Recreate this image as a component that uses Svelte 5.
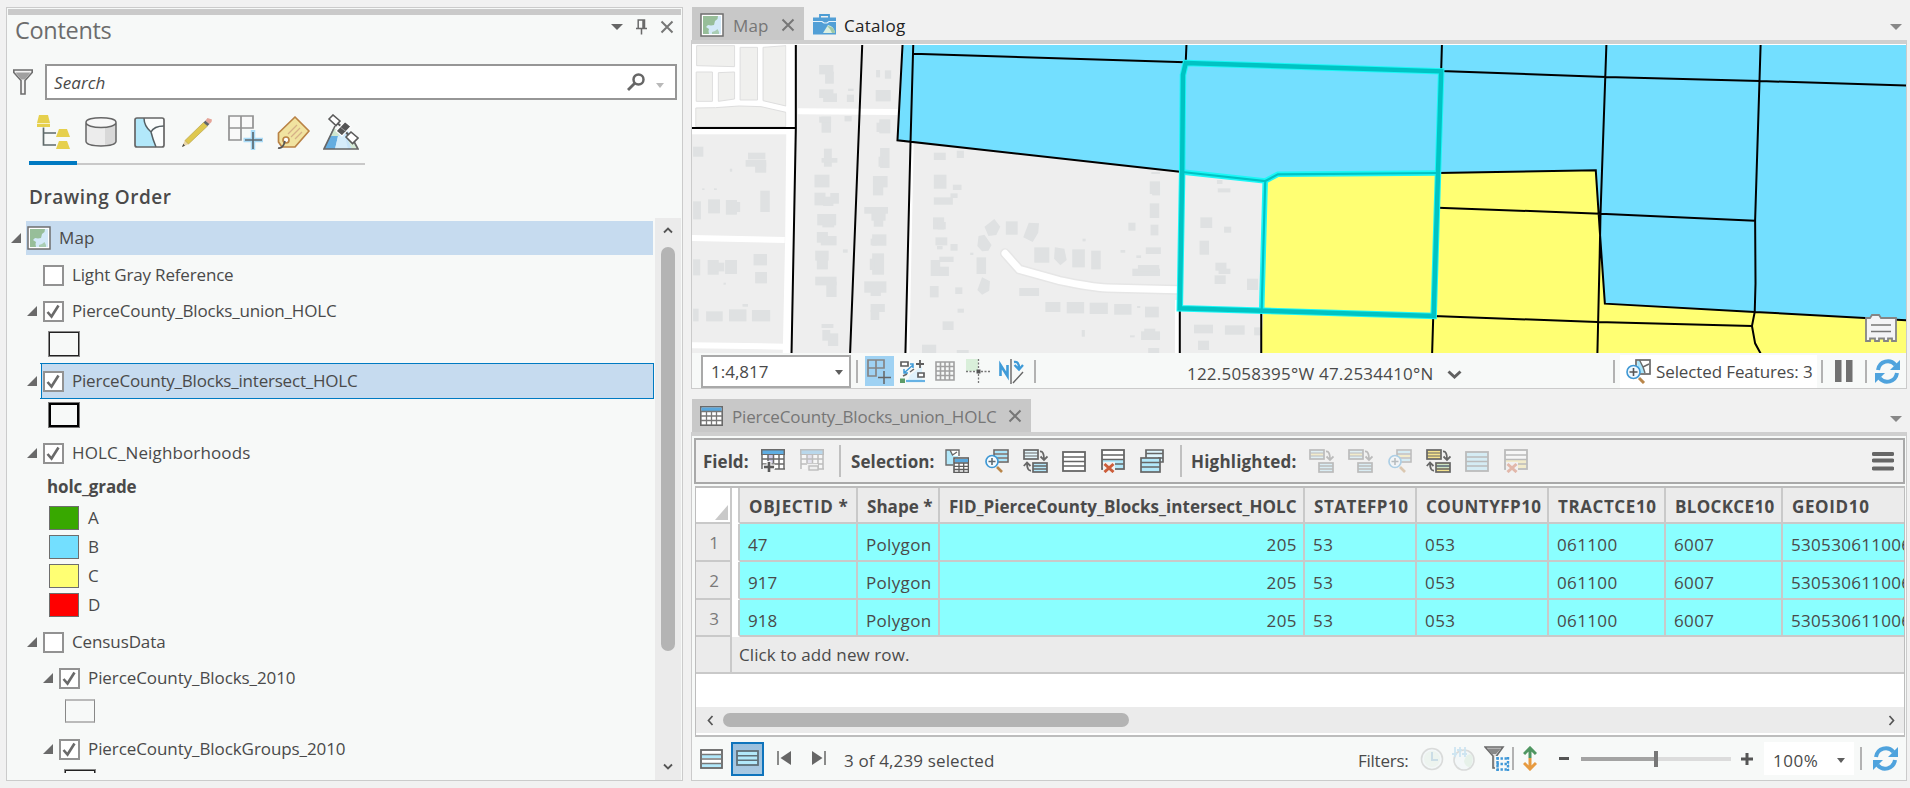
<script>
  // Tracks a label so that it spans the given advance width.
  function fit(node, width) {
    if (!width) return;
    const natural = node.getBoundingClientRect().width;
    const count = node.textContent.length;
    node.style.letterSpacing = (width + 1.5 - natural) / count + 'px';
  }

  const grades = [
    { name: 'A', color: '#38a800' },
    { name: 'B', color: '#73dfff' },
    { name: 'C', color: '#ffff73' },
    { name: 'D', color: '#ff0000' }
  ];

  const columns = [
    { name: 'OBJECTID *', w: 98 },
    { name: 'Shape *', w: 64 },
    { name: 'FID_PierceCounty_Blocks_intersect_HOLC', w: 346 },
    { name: 'STATEFP10', w: 93 },
    { name: 'COUNTYFP10', w: 114 },
    { name: 'TRACTCE10', w: 97 },
    { name: 'BLOCKCE10', w: 98 },
    { name: 'GEOID10', w: 76 }
  ];
  const cellWidths = [0, 64, 29, 19, 29, 59, 39, 149];
  const rows = ['47', '917', '918'].map((id) => [id, 'Polygon', '205', '53', '053', '061100', '6007', '530530611006007']);

  const blocks = [
    [352,195,36,28],[367,215,22,36],[352,268,36,26],[362,280,35,26],[495,270,38,34],[496,210,10,22],[518,211,16,25],[422,284,18,22],[425,266,14,7],[358,350,24,48],[352,350,30,18],[416,348,18,16],[504,358,28,42],[497,368,20,28],[364,446,20,54],[358,474,40,14],[506,444,24,60],[502,470,10,30],[340,524,38,38],[488,528,37,34],[488,560,26,26],[340,578,28,38],[362,590,26,28],[380,579,22,32],[466,621,60,20],[484,636,36,26],[490,660,24,20],[347,642,48,34],[360,660,30,22],[346,696,28,32],[356,708,40,28],[486,703,36,34],[482,716,16,20],[342,752,34,30],[346,778,28,30],[412,748,12,10],[486,760,30,64],[480,776,12,34],[342,830,54,26],[370,845,26,46],[466,844,56,34],[482,870,26,18],[482,912,36,24],[482,930,22,30],[358,972,30,12],[360,990,20,32],[374,1000,26,38],
    [33,440,26,30],[172,458,44,20],[166,480,52,20],[190,488,28,30],[126,506,6,9],[33,604,20,54],[71,598,30,42],[116,600,28,44],[130,606,22,30],[203,572,24,64],[56,565,6,5],[86,565,7,5],[33,778,18,48],[70,780,28,44],[86,788,26,26],[114,780,30,42],[186,762,34,34],[190,816,30,34],[110,848,6,6],[33,926,14,38],[66,934,42,30],[124,928,44,36],[182,930,46,34],[158,912,14,8],
    [642,458,30,22],[700,452,18,22],[642,524,32,42],[690,554,22,16],[642,592,48,22],[684,580,18,14],[640,652,28,36],[652,666,20,22],[646,712,30,24],[684,732,18,20],[650,738,14,10],[634,780,24,48],[656,770,36,16],[656,800,24,28],[750,772,24,50],[632,858,22,34],[696,862,18,20],[702,926,16,12],[664,964,28,26],[734,758,8,7],[824,664,30,40],[896,742,38,46],[992,748,32,54],[1040,752,24,56],[858,864,50,24],[924,906,38,30],[978,906,44,34],[1036,908,46,34],[1098,912,44,32],[1156,918,8,6],[1176,920,35,32],[1188,544,26,38],[1194,562,20,24],[1188,610,24,44],[1190,674,20,32],[1134,668,18,24],[1178,742,38,20],[1144,806,70,22],[1158,795,54,20],[1114,750,12,8],[1154,766,12,8],[1018,716,8,8],[1016,990,8,20],[1166,994,48,26],[1174,986,28,20],[1138,1006,12,6],[1184,1044,28,16],[612,1034,36,26],[700,1050,30,10],[1192,516,22,6],
    [1316,652,30,32],[1376,680,18,18],[1314,722,24,42],[1354,788,28,24],[1362,806,30,16],[1352,826,28,26],[1434,836,28,34],[1360,565,32,12],[1358,540,14,12],[1300,974,48,26],[1378,976,50,28],[1310,1022,28,28],[1452,982,18,24]
  ];
</script>

{#snippet t(text, w, cls = '')}<span class="t {cls}" use:fit={w}>{text}</span>{/snippet}

{#snippet mapIcon()}
  <svg class="i" width="24" height="24" viewBox="0 0 24 24">
    <rect x="1" y="1" width="22" height="22" fill="#fff" stroke="#6e6e6e" stroke-width="1.5" />
    <rect x="3" y="3" width="18" height="18" fill="#d3e9f8" />
    <path d="M3 3H18L17.500 6L15 8L14 12L11 12.500L8 12L6 14L9 16L8.500 18L9 21H3Z" fill="#97be99" />
    <path d="M12 19L15 18L17.500 16L19 19V21H12Z" fill="#a9cdb4" />
  </svg>
{/snippet}

{#snippet close()}
  <svg class="i" width="14" height="14" viewBox="0 0 14 14"><path d="M1.5 1.5L12.5 12.5M12.5 1.5L1.5 12.5" stroke="#777" stroke-width="2" /></svg>
{/snippet}

{#snippet arrow(c = '#777')}
  <svg class="i" width="12" height="6" viewBox="0 0 12 6"><path d="M0 0H12L6 6Z" fill={c} /></svg>
{/snippet}

{#snippet smallArrow(c = '#5e5e5e')}
  <svg class="i" width="8" height="5" viewBox="0 0 8 5"><path d="M0 0H8L4 5Z" fill={c} /></svg>
{/snippet}

{#snippet check(on)}
  <svg class="i" width="21" height="21" viewBox="0 0 21 21">
    <rect x="1" y="1" width="19" height="19" fill="#fff" stroke="#929292" stroke-width="2" />
    {#if on}<path d="M4.5 11L8.5 15.5L15.5 4.5" fill="none" stroke="#6a6a6a" stroke-width="2.6" />{/if}
  </svg>
{/snippet}

{#snippet tri()}
  <svg class="i" width="10" height="10" viewBox="0 0 10 10"><path d="M10 0V10H0Z" fill="#6a6a6a" /></svg>
{/snippet}

{#snippet refresh()}
  <svg class="i" width="25" height="25" viewBox="0 0 25 25">
    <path d="M3 11C4.500 2 15 -.5 20.500 6" fill="none" stroke="#4fa3dd" stroke-width="4" />
    <path d="M25 1V11H15Z" fill="#4fa3dd" />
    <path d="M22 14C20.500 23 10 25.500 4.500 19" fill="none" stroke="#4fa3dd" stroke-width="4" />
    <path d="M0 24V14H10Z" fill="#4fa3dd" />
  </svg>
{/snippet}

{#snippet fieldIcon(plus)}
  <svg class="i" class:dim={!plus} width="24" height="24" viewBox="0 0 24 24">
    <rect x="1" y="1" width="22" height="19" fill="#fff" />
    <rect x="0" y="0" width="24" height="6" fill="#6a6a6a" />
    <rect x="1.500" y="1.500" width="21" height="3.500" fill="#60aee3" />
    <rect x="7" y="6" width="5" height="8" fill="#cfcbe8" />
    <path d="M1 5V20M23 5V20M1 10H23M1 15H23M7 6V14M12.500 6V14M18 6V20M13 20H24" stroke="#6a6a6a" stroke-width="1.500" fill="none" />
    {#if plus}
      <path d="M8 12V24M2 18H14" stroke="#f1f1f1" stroke-width="5" />
      <path d="M8 13V23M3 18H13" stroke="#5a5a5a" stroke-width="2.600" />
    {:else}
      <rect x="7" y="15" width="11" height="7" fill="#f1f1f1" /><rect x="9" y="17" width="9" height="4" fill="#eee" stroke="#6a6a6a" stroke-width="1.400" />
    {/if}
  </svg>
{/snippet}

{#snippet zoomRows(dim)}
  <svg class="i" class:dim width="24" height="24" viewBox="0 0 24 24">
    <rect x="9" y="1" width="14" height="12" fill="#fff" stroke="#6a6a6a" stroke-width="1.600" />
    <path d="M9 5H23M9 9H23" stroke="#6a6a6a" stroke-width="1.500" /><path d="M10 3H22M12 11H22" stroke="#a9e4fa" stroke-width="2" /><path d="M10 7H22" stroke={dim ? '#f4e38e' : '#a9e4fa'} stroke-width="2" />
    <path d="M12 18L17 23" stroke="#b9864a" stroke-width="2.600" />
    <circle cx="7" cy="12.500" r="6" fill="#f5fbff" stroke="#3f98d4" stroke-width="1.700" />
    <path d="M7 9V16M3.500 12.500H10.500" stroke="#5e6a72" stroke-width="1.600" />
  </svg>
{/snippet}

{#snippet switchIcon(fill, up, dim, yellow = false)}
  <svg class="i" class:dim width="25" height="24" viewBox="0 0 25 24">
    <rect x="1" y="1" width="14" height="9" fill={dim ? '#c5ecfa' : fill} stroke="#666" stroke-width="1.700" />
    {#if dim}<path d="M2 5.500H14" stroke={fill} stroke-width="2.500" />{/if}
    <path d="M1 4H15M1 7H15" stroke="#666" stroke-width="1.200" />
    <path d="M17 2.500Q21 2 21 10M17.500 7.500L21 11L24.500 7.500" fill="none" stroke="#666" stroke-width="1.800" />
    <rect x="10" y="14" width="14" height="9" fill={yellow ? '#f4e38e' : '#b5e8fb'} stroke="#666" stroke-width="1.700" />
    {#if yellow}<path d="M11 17H23" stroke="#a9e4fa" stroke-width="3" />{/if}
    <path d="M10 17H24M10 20H24" stroke="#666" stroke-width="1.500" />
    {#if up}<path d="M8 21.500Q4 22 4 14M.8 17L4 13.500L7.500 17" fill="none" stroke="#666" stroke-width="1.800" />{/if}
  </svg>
{/snippet}

{#snippet rowsIcon(fill, dim)}
  <svg class="i" class:dim width="24" height="21" viewBox="0 0 24 21">
    <rect x="1" y="1" width="22" height="19" fill={fill} stroke="#666" stroke-width="1.800" /><path d="M1 6H23M1 10.500H23M1 15H23" stroke="#666" stroke-width="1.700" />
  </svg>
{/snippet}

{#snippet deleteRows(fill, dim)}
  <svg class="i" class:dim width="24" height="24" viewBox="0 0 24 24">
    <rect x="1" y="1" width="22" height="19" fill="#fff" stroke="#666" stroke-width="1.800" />
    <rect x="2" y="11" width="20" height="8" fill={fill} /><path d="M1 6H23M1 10.500H23M1 15H23" stroke="#666" stroke-width="1.600" />
    <rect x="2" y="13" width="12" height="11" fill="#f1f1f1" />
    <path d="M3.500 15L12.500 23M12.500 15L3.500 23" stroke="#cc5d3a" stroke-width="3" />
  </svg>
{/snippet}

{#snippet zoomMap()}
  <svg class="i" width="25" height="25" viewBox="0 0 25 25">
    <rect x="10" y="1" width="14" height="14" fill="#fff" stroke="#6a6a6a" stroke-width="1.700" />
    <path d="M11 2H14L18 9L19 14H12Z" fill="#a9e4fa" /><path d="M13.500 1L17 8L23 5M17 8L19 14" stroke="#6a6a6a" stroke-width="1.400" fill="none" />
    <path d="M13 19L18 24" stroke="#b9864a" stroke-width="3" />
    <circle cx="7.500" cy="13" r="6.500" fill="#eef8ff" stroke="#3f98d4" stroke-width="1.600" />
    <path d="M7.500 9V17M3.500 13H11.500" stroke="#555" stroke-width="1.600" />
  </svg>
{/snippet}

{#snippet layer(label, w, on, depth, expand = true)}
  <div class="row" class:deep={depth === 2}>
    <span class="ex">{#if expand}{@render tri()}{/if}</span>
    {@render check(on)}
    {@render t(label, w, 'lbl')}
  </div>
{/snippet}

<div class="app">
  <section class="contents">
    <div class="grip"></div>
    <header class="title">
      {@render t('Contents', 95, 'h')}
      <div class="ctl">
        {@render arrow('#666')}
        <svg class="i" width="11" height="16" viewBox="0 0 11 16"><path d="M2.200 9V1H8.500V9M0 9.500H11M5.500 10V15.500" fill="none" stroke="#6a6a6a" stroke-width="1.500" /><path d="M7.500 1V9" stroke="#6a6a6a" stroke-width="2.500" /></svg>
        {@render close()}
      </div>
    </header>
    <div class="searchrow">
      <svg class="i" width="20" height="26" viewBox="0 0 20 26"><path d="M.8 1H19.200V3.500L12 11.500V25H8V11.500L.8 3.500Z" fill="#f4f4f4" stroke="#6e6e6e" stroke-width="1.600" /><path d="M2.500 3.500H17.500L12 10.500H8Z" fill="#a0a0a0" /></svg>
      <div class="search">
        {@render t('Search', 50, 'it')}
        <svg class="i" width="18" height="18" viewBox="0 0 18 18"><circle cx="11.500" cy="6.500" r="5" fill="none" stroke="#666" stroke-width="2.500" /><path d="M8 10L1 17" stroke="#666" stroke-width="2.800" /></svg>
        <span class="drop">{@render smallArrow('#b9b9b9')}</span>
      </div>
    </div>
    <nav class="modes">
      <span class="on"><svg class="i" width="34" height="34" viewBox="0 0 34 34"><path d="M3 0H12L14 8H1ZM1 9H14V12H1Z" fill="#e6d04d" /><path d="M1 8.500H14" stroke="#f7f1c8" /><path d="M7.500 12.500V30H20M7.500 18H20" fill="none" stroke="#5f6a6a" stroke-width="1.700" /><path d="M23 14H31L34 22H20ZM23 26H31L34 34H20Z" fill="#e6d04d" /></svg></span>
      <span><svg class="i" width="32" height="32" viewBox="0 0 32 32"><path d="M1 6V25C2 32 30 32 31 25V6Z" fill="#ececec" /><path d="M20 10L31 7V26Q27 30 20 30Z" fill="#d8d8d8" /><ellipse cx="16" cy="6.500" rx="15" ry="5" fill="#f7f7f7" /><path d="M1 6.500V25.500C2 31.500 30 31.500 31 25.500V6.500M1 6.500C1 0 31 0 31 6.500S1 13 1 6.500" fill="none" stroke="#666" stroke-width="1.500" /></svg></span>
      <span><svg class="i" width="31" height="31" viewBox="0 0 31 31"><rect x="1" y="1" width="29" height="29" rx="2" fill="#fbfdfd" /><path d="M1 1H10Q10 9 17 15Q19 23 22 30H1Z" fill="#b2e8fa" /><path d="M10 1Q10 9 17 15Q19 23 22 30M17 15Q20 9 30 9" fill="none" stroke="#555f63" stroke-width="1.500" /><rect x="1" y="1" width="29" height="29" rx="2" fill="none" stroke="#666" stroke-width="1.700" /></svg></span>
      <span><svg class="i" width="31" height="31" viewBox="0 0 31 31"><path d="M0 30L3 23L7 27Z" fill="#e9d6a8" /><path d="M0 30L1.300 26.800L3 28.800Z" fill="#444" /><path d="M3 23.500L21.500 5.500L25.500 9L6.500 27Z" fill="#dfc84f" stroke="#b9a44a" stroke-width=".7" /><path d="M21.500 5.500L23.500 3.500L27.500 7L25.500 9Z" fill="#606468" /><path d="M23.500 3.500L25.500 1L30 2.500L29.500 5L27.500 7Z" fill="#e5a498" /></svg></span>
      <span><svg class="i" width="35" height="35" viewBox="0 0 35 35"><path d="M1 1H25V13H1ZM13 1V25H1V13" fill="#f9f9f9" stroke="#929292" stroke-width="1.700" /><path d="M25 15V35M15.500 25H35" stroke="#a9dbf7" stroke-width="4.500" /><path d="M25 17V34M17 25H34" stroke="#5d6b73" stroke-width="1.700" /></svg></span>
      <span><svg class="i" width="33" height="33" viewBox="0 0 33 33"><path d="M18 1L32 15L18 31H5L1.500 26V17Z" fill="#f1e3a0" stroke="#b98346" stroke-width="1.700" stroke-linejoin="round" /><path d="M11 18L20 9M14 21L23 12M18 23L25 16" stroke="#d6b187" stroke-width="1.300" /><circle cx="9" cy="24" r="3" fill="#fff" stroke="#b98346" stroke-width="1.700" /><path d="M8 25Q6 33 1 32" fill="none" stroke="#555" stroke-width="1.700" /></svg></span>
      <span><svg class="i" width="36" height="36" viewBox="0 0 36 36"><path d="M10 15L1 35H35L25 17Z" fill="#c6e3f8" /><path d="M10 15L1 35H12L15 22Z" fill="#64ade0" /><path d="M15 22L22 22L25 35H12Z" fill="#d5ecfa" /><path d="M10 15L7 22H16L15 15Z" fill="#cfe6d0" /><path d="M26 20L35 35H29L23 22Z" fill="#d5ead6" /><path d="M12 12L1 35H35L28 22" fill="none" stroke="#666" stroke-width="1.700" /><path d="M12 7L20 14M22 17L28 24" stroke="#5b5b5b" stroke-width="2" /><path d="M6 5L10 1L17 7L13 11.500ZM23 23L28 18L35 24L29.500 29.500Z" fill="#fff" stroke="#5b5b5b" stroke-width="1.600" /><path d="M13 17L22 7.500L28 12.500L19 22Z" fill="#555" stroke="#fff" stroke-width="1.200" /><path d="M17 13L23 17.500" stroke="#999" stroke-width="1" /></svg></span>
    </nav>
    <h2>{@render t('Drawing Order', 141, 'sb')}</h2>
    <div class="tree">
      <div class="rows">
        <div class="row map">
          <span class="ex">{@render tri()}</span>
          <div class="sel">{@render mapIcon()}{@render t('Map', 34, 'lbl')}</div>
        </div>
        {@render layer('Light Gray Reference', 160, false, 1, false)}
        {@render layer('PierceCounty_Blocks_union_HOLC', 263, true, 1)}
        <div class="sw mid"><i class="thin"></i></div>
        <div class="picked">{@render layer('PierceCounty_Blocks_intersect_HOLC', 284, true, 1)}</div>
        <div class="sw"><i class="thick"></i></div>
        {@render layer('HOLC_Neighborhoods', 177, true, 1)}
        <div class="gradehead">{@render t('holc_grade', 88, 'b')}</div>
        {#each grades as g}
          <div class="grade"><i style="background: {g.color}"></i>{@render t(g.name, 0)}</div>
        {/each}
        <div class="gap"></div>
        {@render layer('CensusData', 92, false, 1)}
        {@render layer('PierceCounty_Blocks_2010', 206, true, 2)}
        <div class="sw deep"><i class="faint"></i></div>
        {@render layer('PierceCounty_BlockGroups_2010', 256, true, 2)}
        <div class="sw deep"><i class="thin"></i></div>
      </div>
      <div class="vscroll">
        <svg class="i" width="10" height="7" viewBox="0 0 10 7"><path d="M1 5.500L5 1.500L9 5.500" fill="none" stroke="#555" stroke-width="1.800" /></svg>
        <b></b>
        <svg class="i" width="10" height="7" viewBox="0 0 10 7"><path d="M1 1.500L5 5.500L9 1.500" fill="none" stroke="#555" stroke-width="1.800" /></svg>
      </div>
    </div>
  </section>

  <div class="right">
    <section class="pane">
      <div class="tabs">
        <div class="tab t1">{@render mapIcon()}{@render t('Map', 34)}{@render close()}</div>
        <div class="tab2">
          <svg class="i" width="23" height="21" viewBox="0 0 23 21"><path d="M7 4V1H16V4" fill="none" stroke="#4d9dd4" stroke-width="1.800" /><rect x="0" y="3.500" width="23" height="17" fill="#529fd6" /><path d="M0 7.500H9L11 9H14L16 7.500H23" fill="none" stroke="#e7f3fb" stroke-width="1.200" /><path d="M10 19L15 11Q21 12 22 19Z" fill="#dcefe0" /><path d="M14 12Q18 15 19 19H22Q21 12 14 12" fill="#9fc9a6" /></svg>
          {@render t('Catalog', 60)}
        </div>
        <span class="end">{@render arrow('#888')}</span>
      </div>
      <div class="body">
        <div class="view">
          <svg width="1216" height="308" viewBox="692 45 1216 308">
            <rect x="692" y="45" width="1216" height="308" fill="#eeeeee" />
            <g class="geo" transform="matrix(.39541 0 0 .33333 680 0)">
              <rect x="30" y="135" width="252" height="268" fill="#fff" />
              <g fill="#f0f0ee" stroke="#dedede" stroke-width="1">
                <path d="M42 137H138V200L42 197ZM152 142H196V300H152ZM210 142L268 137V318L210 302ZM41 216H82V304H41ZM97 218L138 216V297L97 304ZM40 324L90 323L150 318L205 320L268 337V380H40Z" />
              </g>
              <g class="roads">
                <path d="M279 135V395L276 720L270 1060" stroke-width="8" /><path d="M33 396H280" stroke-width="4" />
                <path d="M30 714L265 720M30 1036L265 1040" stroke-width="6" /><path d="M298 334L550 336" stroke-width="6" />
                <path d="M586 430L575 1060M1257 900V1060" stroke-width="4" />
                <path d="M822 760L858 808L960 842Q1040 862 1080 864L1256 869" stroke-width="10" stroke="#e6e6e6" stroke-linecap="round" />
                <path d="M822 760L858 808L960 842Q1040 862 1080 864L1256 869" stroke-width="7" stroke-linecap="round" />
              </g>
              <g fill="#dfe1e2">
                {#each blocks as [x, y, w, h]}<rect {x} {y} width={w} height={h} />{/each}
                <path d="M770 680L795 657L810 680L800 705L780 708ZM882 668L908 670L906 698L892 726L868 712ZM755 708L770 704L788 735L780 752L764 754L752 738ZM948 742L972 746L978 780L962 796L946 776ZM764 832L784 844L782 872L764 884L752 870Z" />
              </g>
              <path fill="#73dfff" d="M563 130L550 421L1270 516L1480 543L1512 523L1916 519L2316 511L2339 911L2718 936L3110 961V130Z" />
              <path fill="#ffff73" d="M1480 543L1512 523L1916 519L2316 511L2339 911L2718 936L3110 961V1065H1469L1475 935Z" />
              <g class="ink">
                <path d="M293 130V384L282 1065M30 384H293M461 130L430 1065M590 130L583 425L570 1065M563 130L550 421L1270 516M590 161L1279 187M1281 130L1279 187M1264 925V1065M1470 935V1065" />
                <path d="M1927 130L1925 213L2342 231L2731 243L3110 257M2343 130L2328 640L2326 760L2320 1065M2733 130L2719 660L2720 850L2718 936L2711 978L2719 1030L2735 1065M1916 519L2316 511L2326 690L2339 911L2718 936L3110 961M1916 623L2328 641L2719 662M1906 948L2320 966L2711 978M1905 948L1902 1065" />
              </g>
              <path class="glow g1" d="M1270 516L1480 543L1512 523L1917 519M1480 543L1471 933" />
              <path class="glow g2" d="M1279 189L1925 214L1917 519L1906 948L1264 925L1270 516L1272 225Z" />
              <path class="teal k1" d="M1270 516L1480 543L1512 523L1917 519M1480 543L1471 933" />
              <path class="teal k2" d="M1279 189L1925 214L1917 519L1906 948L1264 925L1270 516L1272 225Z" />
            </g>
            <path d="M1866 318H1870L1872 315H1879L1881 318H1896V341H1892V338.500H1888V341H1884V338.500H1879V341H1875V338.500H1870V341H1866Z" fill="#f4f4f6" stroke="#858585" stroke-width="1.800" />
            <path d="M1871 325H1891M1871 331.500H1891" stroke="#777" stroke-width="1.600" />
          </svg>
        </div>
        <div class="mapbar">
          <div class="scale">{@render t('1:4,817', 56)}{@render smallArrow()}</div>
          <u></u>
          <span class="lit"><svg class="i" width="25" height="25" viewBox="0 0 25 25"><path d="M1 1H17V9H1ZM9 1V17H1V9" fill="none" stroke="#858585" stroke-width="1.700" /><path d="M17 12V25M11 18.500H24" stroke="#666" stroke-width="1.500" /></svg></span>
          <svg class="i" width="25" height="23" viewBox="0 0 25 23"><path d="M10 15L22 6V20H8Z" fill="#dff2fc" /><path d="M1 2H8V6H1ZM18 13H24V17H18Z" fill="#fff" stroke="#5e5e5e" stroke-width="1.700" /><path d="M16 4H24M20 0V8" stroke="#5e5e5e" stroke-width="1.800" /><path d="M4 13L13 5M4 9V13H8M10 4H13V8" stroke="#3f9bd8" stroke-width="1.500" fill="none" /><path d="M3 16L7 14M10 12L14 9" stroke="#666" stroke-width="1.500" /><path d="M6 21H25" stroke="#66b2e4" stroke-width="2.200" /><rect x="0" y="18.500" width="5" height="4.500" fill="#5c9b67" /></svg>
          <svg class="i" width="20" height="20" viewBox="0 0 20 20"><path d="M1 1H19V19H1ZM1 5.500H19M1 10H19M1 14.500H19M5.500 1V19M10 1V19M14.500 1V19" fill="none" stroke="#a0a0a0" stroke-width="1.600" /></svg>
          <svg class="i" width="25" height="25" viewBox="0 0 25 25"><rect width="12" height="12" fill="#d9efda" /><path d="M12.500 0V10M12.500 15V25M0 12.500H10M15 12.500H25" stroke="#777" stroke-width="1.300" stroke-dasharray="2 1.500" /><rect x="10.500" y="10.500" width="4" height="4" fill="#555" /></svg>
          <svg class="i" width="25" height="25" viewBox="0 0 25 25"><path d="M1.500 17V6L8.500 17V6" fill="none" stroke="#3f9bd8" stroke-width="2.600" /><path d="M12 0V25M24 13L14 24" stroke="#666" stroke-width="1.400" /><path d="M15 3Q20 2 20 9M15.500 6L20 10.500L24 6" stroke="#3f9bd8" stroke-width="2.300" fill="none" /></svg>
          <u></u>
          <span class="coord">{@render t('122.5058395°W 47.2534410°N', 245)}<svg class="i" width="15" height="9" viewBox="0 0 15 9"><path d="M1.500 1.500L7.500 7L13.500 1.500" fill="none" stroke="#606060" stroke-width="3" /></svg></span>
          <u></u>
          <div class="feat">{@render zoomMap()}{@render t('Selected Features: 3', 155)}</div>
          <u></u>
          <svg class="i" width="18" height="22" viewBox="0 0 18 22"><path d="M0 0H6.500V22H0ZM11 0H17.500V22H11Z" fill="#717171" /></svg>
          <u></u>
          {@render refresh()}
        </div>
      </div>
    </section>

    <section class="pane">
      <div class="tabs">
        <div class="tab t3">
          <svg class="i" width="23" height="20" viewBox="0 0 23 20"><rect x=".8" y=".8" width="21.400" height="18.400" fill="#fff" stroke="#6a6a6a" stroke-width="1.600" /><rect x="1.500" y="1.500" width="20" height="3.500" fill="#5aa8dd" /><path d="M1 5.500H22M1 10H22M1 14.500H22M6.500 5V19M11.500 5V19M16.500 5V19" stroke="#777" stroke-width="1.300" /></svg>
          {@render t('PierceCounty_Blocks_union_HOLC', 263)}{@render close()}
        </div>
        <span class="end">{@render arrow('#888')}</span>
      </div>
      <div class="body low">
        <div class="tools">
          {@render t('Field:', 44, 'b')}
          {@render fieldIcon(true)}
          {@render fieldIcon(false)}
          <u></u>
          {@render t('Selection:', 82, 'b')}
          <svg class="i" width="24" height="24" viewBox="0 0 24 24"><path d="M1 1H13V8H8V16H1Z" fill="#b2e8fa" /><path d="M5 1H14V7H8Z" fill="#fff" /><path d="M8 16H1V1H14V7M5 1L7.500 6L12 3" fill="none" stroke="#6a6a6a" stroke-width="1.400" /><rect x="9" y="9" width="14.500" height="14.500" fill="#fff" stroke="#5e5e5e" stroke-width="1.600" /><rect x="10" y="10" width="13" height="3.500" fill="#5aa8dd" /><path d="M9 14H23M9 17.300H23M9 20.500H23M14 14V23M18.700 14V23" stroke="#5e5e5e" stroke-width="1.300" /></svg>
          {@render zoomRows(false)}
          {@render switchIcon('#e4f7fd', true, false)}
          {@render rowsIcon('#fff', false)}
          {@render deleteRows('#b2e8fa', false)}
          <svg class="i" width="24" height="24" viewBox="0 0 24 24"><path d="M6 1H23V13H6Z" fill="#dff5fd" stroke="#666" stroke-width="1.700" /><path d="M6 4.500H23M18 9H23" stroke="#666" stroke-width="1.500" /><rect x="1" y="9" width="19" height="14" fill="#b2e8fa" stroke="#666" stroke-width="1.700" /><path d="M1 13.500H20M1 18H20" stroke="#666" stroke-width="1.600" /></svg>
          <u></u>
          {@render t('Highlighted:', 104, 'b')}
          {@render switchIcon('#f4e38e', false, true)}
          {@render switchIcon('#f4e38e', false, true)}
          {@render zoomRows(true)}
          {@render switchIcon('#f4e38e', true, false, true)}
          {@render rowsIcon('#a9e4fa', true)}
          {@render deleteRows('#f4e38e', true)}
          <svg class="i menu" width="22" height="19" viewBox="0 0 22 19"><path d="M1.500 2H20.500M1.500 8.500H20.500M1.500 16.500H20.500" stroke="#666" stroke-width="3.800" stroke-linecap="round" /></svg>
        </div>
        <div class="table">
          <div class="tr head">
            <div class="num corner"><svg width="13" height="15" viewBox="0 0 13 15"><path d="M13 0V15H0Z" fill="#c9c9c9" /></svg></div>
            <div class="gut"></div>
            {#each columns as c}<div class="th">{@render t(c.name, c.w, 'b')}</div>{/each}
          </div>
          {#each rows as r, n}
            <div class="tr">
              <div class="num">{n + 1}</div>
              <div class="gut"></div>
              {#each r as v, k}<div class="td" class:rt={k === 2}>{@render t(v, cellWidths[k])}</div>{/each}
            </div>
          {/each}
          <div class="add"><div class="num"></div>{@render t('Click to add new row.', 169)}</div>
          <div class="hscroll">
            <svg class="i" width="7" height="11" viewBox="0 0 7 11"><path d="M5.500 1L1.500 5.500L5.500 10" fill="none" stroke="#555" stroke-width="1.700" /></svg>
            <b></b>
            <svg class="i r" width="7" height="11" viewBox="0 0 7 11"><path d="M1.500 1L5.500 5.500L1.500 10" fill="none" stroke="#555" stroke-width="1.700" /></svg>
          </div>
        </div>
        <div class="status">
          <svg class="i" width="23" height="20" viewBox="0 0 23 20"><rect x="1" y="1" width="21" height="18" fill="#fff" stroke="#666" stroke-width="1.800" /><path d="M2 7.500H21M2 16.500H21" stroke="#b2e8fa" stroke-width="3" /><path d="M1 5.500H22M1 10H22M1 14.500H22" stroke="#777" stroke-width="1.500" /></svg>
          <span class="press"><svg class="i" width="23" height="16" viewBox="0 0 23 16"><rect x="1" y="1" width="21" height="14" fill="#b2e8fa" stroke="#5f6f78" stroke-width="1.800" /><path d="M1 5.700H22M1 10.300H22" stroke="#5f6f78" stroke-width="1.600" /></svg></span>
          <svg class="i up" width="15" height="14" viewBox="0 0 15 14"><path d="M1 0V14" stroke="#666" stroke-width="1.500" /><path d="M14 0V14L3.500 7Z" fill="#666" /></svg>
          <svg class="i up" width="15" height="14" viewBox="0 0 15 14"><path d="M14 0V14" stroke="#666" stroke-width="1.500" /><path d="M1 0V14L11.500 7Z" fill="#666" /></svg>
          {@render t('3 of 4,239 selected', 149, 'lo')}
          {@render t('Filters:', 49, 'lo')}
          <svg class="i pale" width="24" height="24" viewBox="0 0 24 24"><circle cx="12" cy="12" r="10.500" fill="#e8f3f8" stroke="#888" stroke-width="1.600" /><circle cx="12" cy="12" r="8" fill="#d2e7d6" /><path d="M12 5V13H18" fill="none" stroke="#5090b5" stroke-width="2" /></svg>
          <svg class="i pale" width="24" height="24" viewBox="0 0 24 24"><circle cx="12" cy="13" r="10" fill="#e8f3f8" stroke="#888" stroke-width="1.600" /><path d="M12 14Q15 5 20 8Q22 15 18 20Q13 20 12 14" fill="#b9dcc0" /><path d="M3 0V10M8 0V10M13 0V10M0 7H5M5 3H10M10 7H15" stroke="#5caee0" stroke-width="1.800" /></svg>
          <svg class="i" width="26" height="25" viewBox="0 0 26 25"><path d="M1 1H19L12.500 10V22H9V10Z" fill="#ddd" stroke="#6a6a6a" stroke-width="1.600" /><path d="M3 2.500H17L12 8H8Z" fill="#888" /><rect x="11" y="10" width="15" height="15" fill="#f7f9f8" /><path d="M12.500 12.500H25M12.500 18H25M12.500 23.500H25" stroke="#3f98d8" stroke-width="2.400" stroke-dasharray="2.400 1.600" /><path d="M13.500 11V25M24 11V25" stroke="#3f98d8" stroke-width="2.400" stroke-dasharray="2.400 1.600" /></svg>
          <u></u>
          <svg class="i" width="14" height="25" viewBox="0 0 14 25"><path d="M7 3V12M1 8L7 2L13 8" fill="none" stroke="#4f9661" stroke-width="3" /><path d="M7 12V22M1 17L7 23L13 17" fill="none" stroke="#e79b41" stroke-width="3" /></svg>
          <i class="minus"></i>
          <div class="slider"><i class="done"></i><i class="knob"></i><i class="rest"></i></div>
          <svg class="i" width="12" height="12" viewBox="0 0 12 12"><path d="M6 0V12M0 6H12" stroke="#555" stroke-width="3" /></svg>
          <div class="pct">{@render t('100%', 44)}{@render smallArrow()}</div>
          <u></u>
          {@render refresh()}
        </div>
      </div>
    </section>
  </div>
</div>

<style>
  :global(body) { background: #f1f1f1; }
  * { box-sizing: border-box; }
  .app { display: flex; gap: 8px; width: 1910px; height: 788px; padding: 7px 3px 7px 6px; overflow: hidden; background: #f1f1f1; font: 17px/22px "Open Sans", "Noto Sans", sans-serif; color: #4a4a4a; }
  .t { display: inline-block; white-space: pre; flex: none; justify-self: start; }
  .i { display: block; flex: none; }
  .b { font-weight: 700; }
  u { display: block; width: 2px; height: 23px; background: #b2b2b2; }
  .dim { opacity: .38; }

  .contents { width: 677px; flex: none; display: flex; flex-direction: column; background: #f7f9f8; border: 1px solid #cbcbcb; }
  .grip { height: 6px; margin: 1px 1px 0; background: #cacaca; flex: none; }
  .title { display: flex; justify-content: space-between; height: 49px; padding-left: 8px; flex: none; }
  .h { font-size: 23.500px; line-height: 30px; color: #6c6c6c; }
  .ctl { display: flex; gap: 13px; align-items: center; height: 24px; padding-right: 8px; }
  .searchrow { display: flex; gap: 12px; align-items: center; height: 36px; padding: 0 5px 0 6px; flex: none; }
  .search { flex: 1; height: 36px; display: flex; align-items: center; border: 2px solid #969696; background: #fff; padding-left: 7px; }
  .it { font-style: italic; margin-right: auto; padding-top: 1px; }
  .drop { padding: 7px 11px 0 11px; }
  .modes { display: flex; width: 336px; height: 65px; margin-left: 22px; border-bottom: 2px solid #c9c9c9; flex: none; }
  .modes span { width: 48px; height: 65px; display: flex; justify-content: center; align-items: center; padding-bottom: 1px; }
  .modes .on { border-bottom: 4px solid #007ac2; padding: 2px 0 0 0; }
  h2 { margin: 0; height: 53px; padding: 20px 0 0 22px; font-weight: 600; font-size: 19px; line-height: 24px; flex: none; }
  .tree { display: flex; flex: 1; min-height: 0; }
  .rows { width: 648px; height: 555px; overflow: hidden; }
  .row { display: flex; align-items: center; height: 36px; padding-left: 20px; }
  .row.deep { padding-left: 36px; }
  .ex { width: 16px; display: flex; }
  .lbl { margin-left: 8px; }
  .map { height: 39px; padding-left: 4px; }
  .map .ex { width: 15px; }
  .map .lbl { padding-top: 1px; }
  .sel { display: flex; flex: 1; align-items: center; height: 34px; background: #c6dbef; padding-left: 1px; margin-right: 2px; }
  .sw { height: 36px; padding: 4px 0 0 42px; }
  .sw.mid { height: 34px; padding-top: 3px; }
  .sw.deep { height: 35px; padding: 3px 0 0 58px; }
  .sw i { display: block; width: 30px; height: 24px; border: 2px solid #444; }
  .sw .thin { border: 1px solid #222; border-width: 1px; outline: .5px solid #888; }
  .sw .thick { border: 2px solid #000; outline: .5px solid #777; }
  .sw .faint { border: 1px solid #888; border-width: 2px 1px; border-color: #bababa #888; }
  .picked { height: 36px; margin-right: 1px; background: linear-gradient(#007ac2, #007ac2) no-repeat 34px 0 / 1px 100%, linear-gradient(90deg, transparent 34px, #c6dbef 34px); border: 0 solid; border-width: 1px 1px 1px 0; border-image: linear-gradient(90deg, transparent 34px, #007ac2 34px) 1; }
  .picked > :global(.row) { height: 34px; }
  .gradehead { height: 32px; padding: 5px 0 0 40px; }
  .grade { display: flex; align-items: center; gap: 9px; height: 29px; padding: 0 0 0 42px; }
  .grade i { width: 30px; height: 24px; border: 1px solid #6e6e6e; }
  .gap { height: 5px; }
  .vscroll { width: 26px; background: #ebebeb; display: flex; flex-direction: column; align-items: center; padding: 9px 0 10px; }
  .vscroll b { width: 14px; height: 404px; margin: 13px 0 auto; border-radius: 7px; background: #b4b4b4; }

  .right { width: 1216px; display: flex; flex-direction: column; gap: 10px; }
  .pane { height: 382px; display: flex; flex-direction: column; }
  .tabs { display: flex; height: 33px; flex: none; }
  .tab { display: flex; align-items: center; background: #c8c8c8; color: #767676; padding-left: 8px; margin-left: 1px; }
  .t1 { width: 112px; gap: 9px; padding-top: 2px; }
  .t1 .t { margin-right: 3px; }
  .t3 { width: 339px; gap: 9px; }
  .t3 .t { margin-right: 2px; }
  .t1 .t, .t3 .t, .tab2 .t { padding-top: 3px; }
  .tab2 { display: flex; align-items: center; gap: 8px; padding: 2px 0 0 9px; color: #222; }
  .end { margin: 17px 5px 0 auto; }
  .body { flex: 1; min-height: 0; border: 1px solid #cbcbcb; border-top: 4px solid #cfcfcf; background: #f7f9f8; display: flex; flex-direction: column; }
  .view { height: 309px; padding-top: 1px; background: #fff; overflow: hidden; }
  .view svg { display: block; }
  .geo path { vector-effect: non-scaling-stroke; }
  .geo .roads { fill: none; stroke: #fff; }
  .geo .ink { fill: none; stroke: #000; stroke-width: 2; }
  .glow { fill: none; stroke: #1cf7f7; }
  .g1 { stroke-width: 5.500; }
  .g2 { stroke-width: 6.500; }
  .teal { fill: none; stroke: #00c3c3; }
  .k1 { stroke-width: 2.200; }
  .k2 { stroke-width: 4.500; }
  .mapbar { flex: 1; display: grid; align-items: center; padding: 1px 0 0 9px; grid-template-columns: 155px 9px 35px 35px 31px 33px 35px 153px 426px 7px 201px 14px 30px 10px 1fr; }
  .scale { width: 150px; height: 33px; border: 2px solid #a9a9a9; background: #fff; display: flex; justify-content: space-between; align-items: center; padding: 2px 6px 0 8px; }
  .lit { width: 29px; height: 30px; background: #9fd2f3; display: flex; align-items: center; justify-content: center; }
  .coord { display: flex; align-items: center; gap: 13px; padding-top: 6px; }
  .feat { width: 197px; height: 33px; background: #fff; display: flex; align-items: center; gap: 5px; padding-left: 6px; }
  .feat .t { padding-top: 1px; }

  .low { padding: 2px 1px 0 2px; }
  .tools { height: 46px; margin: 0 0 2px; border: 2px solid #a9a9a9; background: #f1f1f1; display: grid; align-items: center; padding-left: 7px; grid-template-columns: 58px 39px 39px 12px 94px 40px 38px 39px 39px 39px 40px 11px 118px 39px 40px 38px 39px 39px 368px 1fr; }
  .tools u { height: 32px; background: #c0c0c0; }
  .tools .t { padding-top: 1px; }
  .table { height: 251px; border: 1px solid #bdbdbd; border-width: 2px 1px; margin-left: 1px; background: #fff; flex: none; }
  .tr { display: grid; grid-template-columns: 36px 8px 118px 82px 365px 112px 132px 117px 117px 1fr; height: 38px; }
  .tr:nth-child(4) { height: 37px; }
  .tr.head { height: 36px; }
  .tr > div { border-right: 2px solid #c9c9c9; border-bottom: 2px solid #c9c9c9; min-width: 0; overflow: hidden; }
  .tr > div:last-child { border-right: 0; }
  .tr .num { background: #ebebeb; color: #7a7a7a; text-align: center; line-height: 37px; padding-left: 2px; }
  .tr .corner { background: #fff; padding: 17px 0 0 16px; line-height: 0; }
  .tr .gut { background: #fff; border-bottom-color: #fff; }
  .th { background: #ebebeb; padding: 2px 0 0 9px; }
  .th .t { line-height: 34px; }
  .td { background: #8affff; padding: 10px 0 0 8px; }
  .td.rt { text-align: right; padding-right: 6px; }
  .add { display: flex; align-items: center; gap: 7px; height: 37px; background: #ebebeb; border-bottom: 2px solid #c9c9c9; }
  .add .num { width: 36px; height: 35px; border-right: 2px solid #c9c9c9; }
  .hscroll { display: flex; align-items: center; height: 26px; margin-top: 33px; background: #ebebeb; padding: 0 9px 0 11px; }
  .hscroll b { width: 406px; height: 14px; margin-left: 9px; border-radius: 7px; background: #b4b4b4; }
  .r { margin-left: auto; }
  .status { flex: 1; display: grid; align-items: center; padding-left: 6px; grid-template-columns: 31px 46px 34px 33px 514px 62px 32px 32px 28px 11px 36px 22px 160px 23px 96px 13px 1fr; }
  .press { width: 33px; height: 34px; border: 2px solid #0f74bc; background: linear-gradient(#9abfdd, #a9c9e2); display: flex; justify-content: center; padding-top: 6px; }
  .up { margin-bottom: 2px; }
  .lo { padding-top: 4px; }
  .pale { opacity: .26; }
  .minus { width: 10px; height: 3px; background: #555; }
  .slider { display: flex; align-items: center; width: 150px; height: 16px; }
  .done { width: 73px; height: 4px; background: #a3a3a3; }
  .knob { width: 4px; height: 16px; background: #777; }
  .rest { flex: 1; height: 4px; background: #dcdcdc; }
  .pct { width: 90px; height: 33px; background: #fff; display: flex; align-items: center; justify-content: space-between; padding: 4px 9px 0 9px; }
</style>
